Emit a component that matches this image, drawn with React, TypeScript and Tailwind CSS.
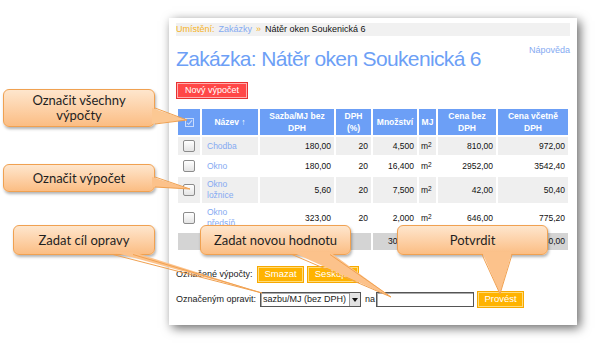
import React from 'react';

const rows = [
  { name: ['Chodba'], sazba: '180,00', dph: '20', mnozstvi: '4,500', bez: '810,00', vcetne: '972,00', gray: true },
  { name: ['Okno'], sazba: '180,00', dph: '20', mnozstvi: '16,400', bez: '2952,00', vcetne: '3542,40', gray: false },
  { name: ['Okno', 'ložnice'], sazba: '5,60', dph: '20', mnozstvi: '7,500', bez: '42,00', vcetne: '50,40', gray: true },
  { name: ['Okno', 'předsíň'], sazba: '323,00', dph: '20', mnozstvi: '2,000', bez: '646,00', vcetne: '775,20', gray: false }
];

const callouts = [
  { left: 'left-[3px] top-[89px] w-[152px] h-[38px]', text: ['Označit všechny', 'výpočty'] },
  { left: 'left-[3px] top-[164px] w-[152px] h-[28px]', text: ['Označit výpočet'] },
  { left: 'left-[13px] top-[225px] w-[142px] h-[30px]', text: ['Zadat cíl opravy'] },
  { left: 'left-[200px] top-[225px] w-[151px] h-[30px]', text: ['Zadat novou hodnotu'] },
  { left: 'left-[397px] top-[225px] w-[151px] h-[30px]', text: ['Potvrdit'] }
];

function Checkbox() {
  return (
    <span className="inline-block w-[12px] h-[12px] rounded-[2px] border border-[#8c8c8c] bg-linear-to-b from-white to-[#e4e4e4] align-middle" />
  );
}

function OrangeButton({ label, w }: { label: string; w: string }) {
  return (
    <div className={`${w} h-[17px] flex items-center justify-center bg-[#ffb300] border border-[#f7a900] shadow-[inset_0_0_0_1px_#ffdc7a] text-white text-[9.5px]`}>
      {label}
    </div>
  );
}

export default function App() {
  return (
    <div className="relative w-[595px] h-[344px] overflow-hidden bg-white" style={{ fontFamily: '"Liberation Sans", Arial, sans-serif' }}>
      <div className="pl-[169px] pt-[18px]">
        <div className="w-[408px] h-[307px] bg-white shadow-[3px_3px_10px_rgba(0,0,0,0.6)] px-[7px] pt-[5px]">
          {/* breadcrumb */}
          <div className="h-[13px] bg-[#f1f1f1] flex items-center text-[9px] gap-[4px]">
            <span className="text-[#f6b21c]">Umístění:</span>
            <span className="text-[#85aaf2]">Zakázky</span>
            <span className="text-[#f6b21c]">»</span>
            <span className="text-[#111]">Nátěr oken Soukenická 6</span>
          </div>

          {/* title */}
          <div className="flex justify-between mt-[9px]">
            <h1 className="text-[21px] leading-[28px] tracking-[-0.65px] text-[#6d9ff6]">Zakázka: Nátěr oken Soukenická 6</h1>
            <a className="text-[9px] text-[#85aaf2] mt-[-1px]">Nápověda</a>
          </div>

          <div className="mt-[9px] w-[72px] h-[17px] flex items-center justify-center bg-[#ff4747] border border-[#e83030] shadow-[inset_0_0_0_1px_#ffb0b0] text-white text-[9px]">
            Nový výpočet
          </div>

          {/* table */}
          <table className="mt-[8px] w-[394px] table-fixed border-separate border-spacing-[2px] text-[8.5px] text-[#111]">
            <colgroup>
              <col className="w-[22px]" />
              <col className="w-[56px]" />
              <col className="w-[74px]" />
              <col className="w-[35px]" />
              <col className="w-[44px]" />
              <col className="w-[17px]" />
              <col className="w-[58px]" />
              <col className="w-[70px]" />
            </colgroup>
            <thead>
              <tr className="bg-[#6c9ff6] text-white font-bold leading-[12px] h-[26px]">
                <th className="p-0 align-middle">
                  <svg width="9" height="9" viewBox="0 0 9 9" className="inline-block">
                    <rect x="0.5" y="0.5" width="8" height="8" fill="none" stroke="#c9dbfc" />
                    <path d="M2 4.8 L3.7 6.3 L7 2.3" fill="none" stroke="#c9dbfc" strokeWidth="1.1" />
                  </svg>
                </th>
                <th className="p-0 font-bold">Název ↑</th>
                <th className="p-0 font-bold">Sazba/MJ bez<br />DPH</th>
                <th className="p-0 font-bold">DPH<br />(%)</th>
                <th className="p-0 font-bold">Množství</th>
                <th className="p-0 font-bold">MJ</th>
                <th className="p-0 font-bold">Cena bez<br />DPH</th>
                <th className="p-0 font-bold">Cena včetně<br />DPH</th>
              </tr>
            </thead>
            <tbody>
              {rows.map((r, i) => (
                <tr key={i} className={`${r.gray ? 'bg-[#efefef]' : 'bg-white'} leading-[11px]`}>
                  <td className="py-[2px] text-center h-[18px]"><Checkbox /></td>
                  <td className="py-[2px] pl-[5px] text-[#85aaf2]">
                    {r.name.map((n) => <div key={n}>{n}</div>)}
                  </td>
                  <td className="py-[2px] pr-[3px] text-right">{r.sazba}</td>
                  <td className="py-[2px] pr-[3px] text-right">{r.dph}</td>
                  <td className="py-[2px] pr-[3px] text-right">{r.mnozstvi}</td>
                  <td className="py-[2px] pl-[2px]">m<span className="text-[6.5px] align-top leading-[8px]">2</span></td>
                  <td className="py-[2px] pr-[3px] text-right">{r.bez}</td>
                  <td className="py-[2px] pr-[3px] text-right">{r.vcetne}</td>
                </tr>
              ))}
              <tr className="bg-[#d4d4d4] leading-[11px] h-[17px]">
                <td colSpan={3} />
                <td />
                <td className="pr-[3px] text-right">30,400</td>
                <td />
                <td className="pr-[3px] text-right">4450,00</td>
                <td className="pr-[3px] text-right">5340,00</td>
              </tr>
            </tbody>
          </table>

          {/* bulk actions */}
          <div className="mt-[14px] flex items-center text-[9px] text-[#1a1a1a]">
            <span className="w-[81px]">Označené výpočty:</span>
            <OrangeButton label="Smazat" w="w-[47px]" />
            <div className="w-[3px]" />
            <OrangeButton label="Seskupit" w="w-[52px]" />
          </div>

          <div className="mt-[8px] flex items-center text-[9px] text-[#1a1a1a]">
            <span className="w-[84px]">Označeným opravit:</span>
            <div className="w-[101px] h-[15px] flex items-stretch bg-white border border-[#555] shadow-[inset_1px_1px_0_#aaa]">
              <span className="flex-1 pl-[2px] leading-[13px]">sazbu/MJ (bez DPH)</span>
              <span className="w-[11px] flex items-center justify-center bg-[#e2e2e2] border-l border-[#999]">
                <svg width="6" height="4" viewBox="0 0 6 4"><path d="M0 0 H6 L3 4 Z" fill="#111" /></svg>
              </span>
            </div>
            <span className="ml-[4px] w-[11px]">na</span>
            <div className="w-[98px] h-[15px] bg-white border border-[#555] shadow-[inset_1px_1px_0_#aaa]" />
            <div className="w-[3px]" />
            <OrangeButton label="Provést" w="w-[47px]" />
          </div>
        </div>
      </div>

      {/* callouts */}
      {callouts.map((c, i) => (
        <div
          key={i}
          className={`absolute ${c.left} flex flex-col items-center justify-center rounded-[6px] border border-[#f0a151] bg-linear-to-b from-[#fee6cd] to-[#fbbd83] shadow-[1px_2px_3px_rgba(0,0,0,0.3)] text-[13px] leading-[15px] text-[#1f1f1f]`}
          style={{ fontFamily: 'Lato, "Noto Sans", sans-serif' }}
        >
          {c.text.map((t) => <span key={t}>{t}</span>)}
        </div>
      ))}

      <svg className="absolute left-0 top-0 pointer-events-none" width="595" height="344" viewBox="0 0 595 344">
        <polygon points="152,108 187,120 152,124" fill="#fcc893" />
        <polyline points="155,108 187,120 155,124" fill="none" stroke="#f0a151" />
        <polygon points="152,177 190,189 152,187" fill="#fcc28b" />
        <polyline points="155,177 190,189 155,187" fill="none" stroke="#f0a151" />
        <polygon points="113,252 262,293 133,252" fill="#fcc28b" />
        <polyline points="113,254.5 262,293 133,254.5" fill="none" stroke="#f0a151" />
        <polygon points="292,252 391,297 330,252" fill="#fcc28b" />
        <polyline points="292,254.5 391,297 330,254.5" fill="none" stroke="#f0a151" />
        <polygon points="482,252 500,294 512,252" fill="#fcc28b" />
        <polyline points="482,254.5 500,294 512,254.5" fill="none" stroke="#f0a151" />
      </svg>
    </div>
  );
}
